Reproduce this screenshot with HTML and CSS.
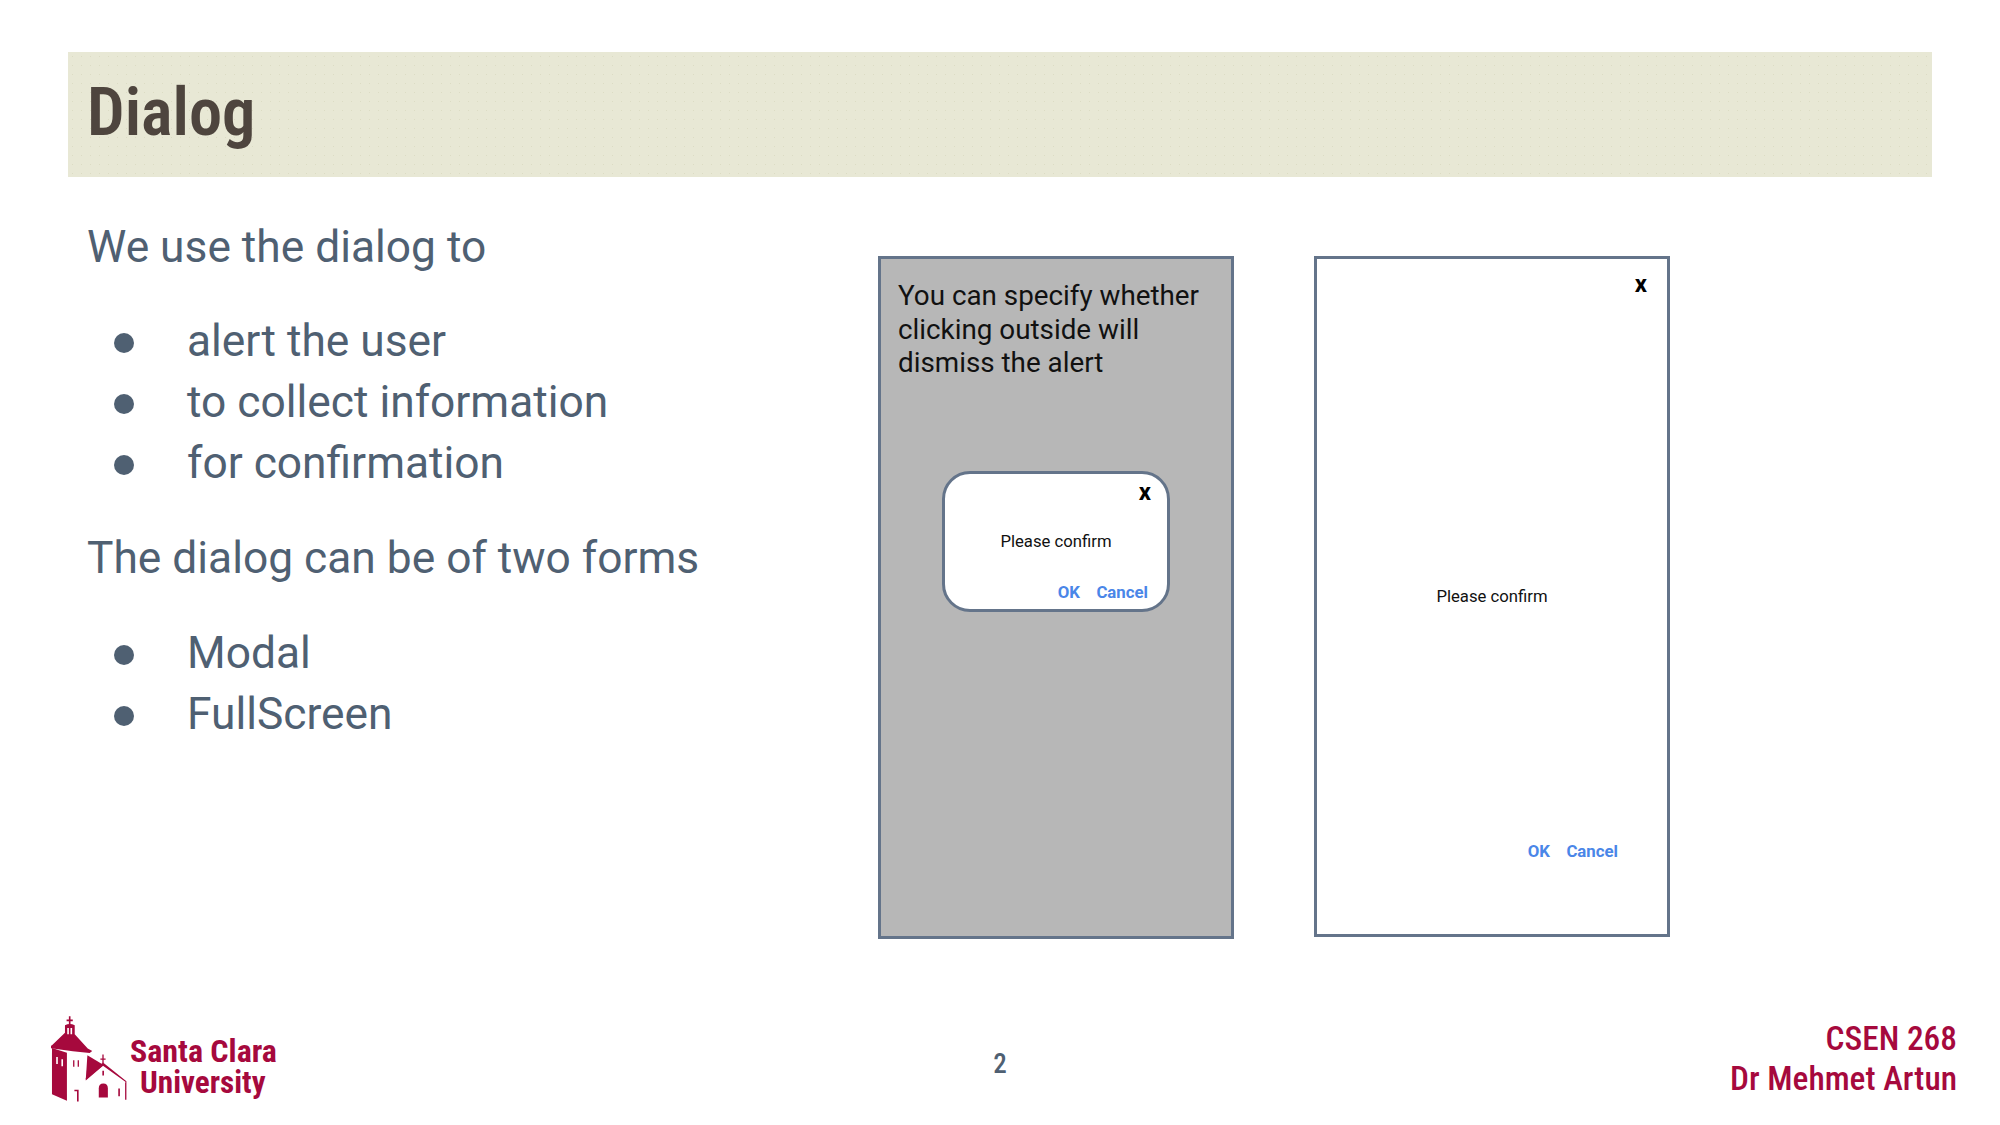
FILE: index.html
```html
<!DOCTYPE html>
<html lang="en">
<head>
<meta charset="utf-8">
<title>Dialog</title>
<link rel="stylesheet" href="styles.css">
</head>
<body>
<main class="slide">
  <header class="banner"><h1 class="title">Dialog</h1></header>
  <section class="content">
    <div class="copy">
      <p class="lead">We use the dialog to</p>
      <ul class="list">
        <li>alert the user</li>
        <li>to collect information</li>
        <li>for confirmation</li>
      </ul>
      <p class="lead lead-second">The dialog can be of two forms</p>
      <ul class="list list-second">
        <li>Modal</li>
        <li>FullScreen</li>
      </ul>
    </div>
    <div class="phone phone-modal">
      <p class="note">You can specify whether clicking outside will dismiss the alert</p>
      <div class="dialog">
        <span class="close">x</span>
        <p class="message">Please confirm</p>
        <div class="actions"><span>OK</span><span>Cancel</span></div>
      </div>
    </div>
    <div class="phone phone-full">
      <span class="close">x</span>
      <p class="message">Please confirm</p>
      <div class="actions"><span>OK</span><span>Cancel</span></div>
    </div>
  </section>
  <footer class="footer">
    <div class="logo">
      <svg class="crest" viewBox="0 0 240 260" width="78" height="87" aria-hidden="true">
        <path class="ink" d="M55 0h5v10h7v5h-7v11h-5V15h-7v-5h7z"/>
        <path class="ink" d="M43 28q15-8 30 0v27l40 44 14 8-8 6-52-5-69-10v-6l5-3 40-38z"/>
        <path class="paper" d="M50 36h5v19h-5zM60 36h5v19h-5z"/>
        <path class="ink" d="M3 98l46 14v148L3 240z"/>
        <path class="ink" d="M112 120l50 30-55 45z"/>
        <path class="ink" d="M158 118h4v12h6v4h-6v10h-4v-10h-6v-4h6z"/>
        <path class="ink" d="M160 142l72 58v4L160 152l-53 46v-8z"/>
        <path class="ink" d="M228 203h4v54h-4z"/>
        <path class="ink" d="M147 250v-28q0-15 14-15t14 15v28z"/>
        <path class="ink" d="M158 168h5v14h-5zM207 222h5v24h-5z"/>
        <path class="ink" d="M68 135h4v20h-4zM82 135h4v20h-4zM72 226h13v36h-5v-31h-8z"/>
        <path class="paper" d="M16 125h5v22h-5zM32 132h5v22h-5z"/>
      </svg>
      <div class="wordmark"><span>Santa Clara</span><span class="second">University</span></div>
    </div>
    <div class="page-number">2</div>
    <div class="credit"><span>CSEN 268</span><span>Dr Mehmet Artun</span></div>
  </footer>
</main>
</body>
</html>
```
FILE: styles.css
```css
* { box-sizing: border-box; }
html, body { margin: 0; padding: 0; background: #fff; }
body { font-family: Roboto, "Noto Sans", sans-serif; }
p, h1, ul { margin: 0; padding: 0; }
.slide { width: 2000px; height: 1125px; position: relative; overflow: hidden; padding-top: 52px; }
.banner {
  margin: 0 68px; height: 125px; padding: 0 19px 5px;
  display: flex; align-items: center;
  background-color: #e8e8d5;
  background-image: radial-gradient(#dcdcc4 0.6px, transparent 0.8px);
  background-size: 9px 9px;
}
.title { font-size: 66.5px; font-weight: 600; font-stretch: 75%; color: #4e453e; line-height: 1; }
.content { display: flex; align-items: flex-start; padding: 0 0 0 87px; margin-top: 40px; }
.copy { width: 791px; color: #4f6072; font-size: 44.3px; line-height: 61px; }
.lead-second { margin-top: 34px; }
.list { list-style: none; margin-top: 33px; }
.list-second { margin-top: 34px; }
.list li { position: relative; padding-left: 100px; }
.list li::before { content: ""; position: absolute; left: 27px; top: 22px; width: 20px; height: 20px; border-radius: 50%; background: #4f6072; }
.phone { width: 356px; height: 683px; margin-top: 39px; border: 3px solid #64748a; position: relative; }
.phone-modal { background: #b7b7b7; padding: 20px 17px; }
.phone-full { background: #fff; margin-left: 80px; height: 681px; }
.note { font-size: 27.8px; line-height: 33.5px; color: #111; }
.dialog { position: absolute; left: 61px; top: 212px; width: 228px; height: 141px; background: #fff; border: 3px solid #64748a; border-radius: 28px; }
.close { position: absolute; right: 16px; top: 6px; font-size: 24px; font-weight: 700; color: #000; line-height: 24px; }
.phone-full .close { right: 20px; top: 13px; }
.message { position: absolute; left: 0; right: 0; top: 58px; text-align: center; font-size: 16.7px; line-height: 20px; color: #111; }
.phone-full .message { top: 328px; }
.actions { position: absolute; right: 19px; top: 108px; display: flex; gap: 16.5px; font-size: 16.8px; font-weight: 700; line-height: 20px; color: #4a86e8; }
.phone-full .actions { right: 49px; top: 582px; }
.footer { position: absolute; left: 0; right: 0; top: 1000px; height: 125px; }
.logo { position: absolute; left: 51px; top: 15px; display: flex; }
.crest { display: block; }
.ink { fill: #a6093d; }
.paper { fill: #fff; }
.wordmark { display: flex; flex-direction: column; margin-left: 1px; padding-top: 21px; color: #a6093d; font-size: 32px; font-weight: 700; font-stretch: 75%; line-height: 31px; }
.wordmark .second { margin-left: 10px; font-size: 31.2px; }
.page-number { position: absolute; left: 0; right: 0; top: 46px; text-align: center; font-size: 27px; font-weight: 500; font-stretch: 75%; line-height: 36px; color: #4f6072; }
.credit { position: absolute; right: 43px; top: 19px; display: flex; flex-direction: column; align-items: flex-end; font-size: 33.4px; font-weight: 500; font-stretch: 75%; line-height: 39.5px; color: #a6093d; }
```
